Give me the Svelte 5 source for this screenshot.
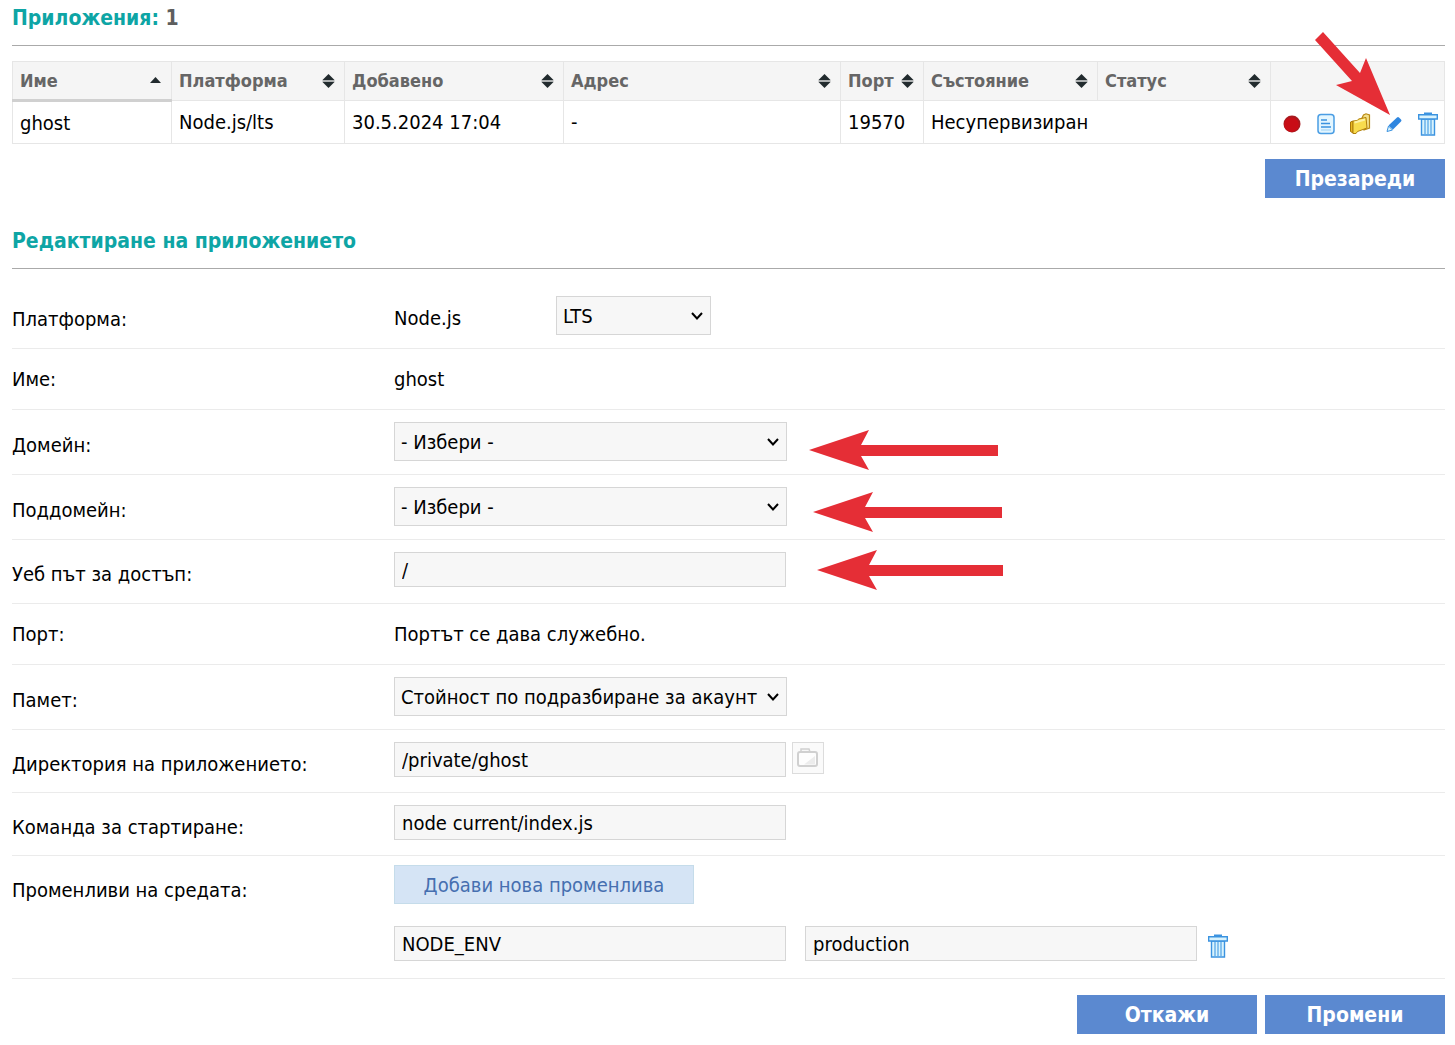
<script>
  const columns = [
    { name: 'Име', cls: 'c-name', sort: 'asc' },
    { name: 'Платформа', cls: 'c-platform', sort: 'both' },
    { name: 'Добавено', cls: 'c-added', sort: 'both' },
    { name: 'Адрес', cls: 'c-address', sort: 'both' },
    { name: 'Порт', cls: 'c-port', sort: 'both' },
    { name: 'Състояние', cls: 'c-state', sort: 'both' },
    { name: 'Статус', cls: 'c-status', sort: 'both' }
  ];
  let directory = $state('/private/ghost');
  let command = $state('node current/index.js');
  let webPath = $state('/');
  let envName = $state('NODE_ENV');
  let envValue = $state('production');
</script>

{#snippet trash()}
  <svg class="trash" width="20" height="24" viewBox="0 0 20 24" aria-hidden="true">
    <path d="M3.500 7h13v16h-13z" fill="#d9f3fd" stroke="#3b93e0" stroke-width="1.4" />
    <path d="M7 7v15M10 7v15M13 7v15" stroke="#5aa8e8" stroke-width="1.3" />
    <path d="M6 1.5h8" stroke="#3b93e0" stroke-width="2" />
    <path d="M.7 2.700h18.600v4.300H.7z" fill="#d9f3fd" stroke="#3b93e0" stroke-width="1.4" />
  </svg>
{/snippet}

{#snippet chevron()}
  <svg class="chevron" width="12" height="8" viewBox="0 0 12 8" aria-hidden="true">
    <path d="M1 1l5 5.500 5-5.500" fill="none" stroke="#000" stroke-width="2" />
  </svg>
{/snippet}

{#snippet arrow(cls, length)}
  <svg class="arrow {cls}" width={length} height="42" aria-hidden="true">
    <path d="M0 21L60 1L52 16H{length}V27H52L60 41Z" fill="#e52e36" />
  </svg>
{/snippet}

<main>
  <h2>Приложения: <span>1</span></h2>

  <div class="apps">
    <table>
      <colgroup>
        {#each columns as c}<col class={c.cls} />{/each}
        <col class="c-actions" />
      </colgroup>
      <thead>
        <tr>
          {#each columns as c}
            <th class:sorted={c.sort === 'asc'} aria-sort={c.sort === 'asc' ? 'ascending' : 'none'}>
              <button class="sort">
                {c.name}
                <svg width="13" height="16" viewBox="0 0 13 16" aria-hidden="true">
                  {#if c.sort === 'asc'}
                    <path d="M1 10L6.500 4L12 10Z" fill="#222b2e" />
                  {:else}
                    <path d="M.5 7L6.500 1L12.500 7Z" fill="#222b2e" />
                    <path d="M.5 9L6.500 15L12.500 9Z" fill="#222b2e" />
                    <path d="M.5 8h12" stroke="#aeb1b2" stroke-width="2" />
                  {/if}
                </svg>
              </button>
            </th>
          {/each}
          <th></th>
        </tr>
      </thead>
      <tbody>
        <tr>
          <td>ghost</td>
          <td>Node.js/lts</td>
          <td>30.5.2024 17:04</td>
          <td>-</td>
          <td>19570</td>
          <td colspan="2">Несупервизиран</td>
          <td class="tools">
            <div class="actions">
              <button aria-label="Спри">
                <svg width="18" height="18" viewBox="0 0 18 18">
                  <circle cx="9" cy="9" r="8.500" fill="#a81a1f" />
                  <circle cx="8.500" cy="9.700" r="7.300" fill="#c80d16" />
                </svg>
              </button>
              <button aria-label="Дневник">
                <svg width="18" height="22" viewBox="0 0 18 22">
                  <rect x="1" y="1.500" width="16" height="19" rx="3" fill="#e3f6ff" stroke="#4a9de4" stroke-width="1.500" />
                  <path d="M4 7h6M4 10.500h9M4 14h10" stroke="#3b93e0" stroke-width="1.400" />
                  <path d="M4 17h10" stroke="#9cd0f5" />
                </svg>
              </button>
              <button aria-label="Файлове">
                <svg width="22" height="22" viewBox="0 0 22 22">
                  <path d="M13 5L14.500 2L17 .8L20.500 2V15L15 17Z" fill="#f3e08a" stroke="#b98a14" stroke-width="1.200" />
                  <path d="M1.500 9L4 8V20L1.500 18.500Z" fill="#e8b923" stroke="#a87708" />
                  <path d="M4 8L8.500 7.500L9.500 6L17 4.500L18 15L8.500 18.500L7 20.500L4 20.500Z" fill="#f8dc4e" stroke="#b07f0c" />
                  <path d="M5.500 9.500L16 6.500" stroke="#fdf2a6" stroke-width="2" />
                </svg>
              </button>
              <button aria-label="Редактирай">
                <svg width="16" height="17" viewBox="0 0 16 17">
                  <path d="M2.500 9.500L11 1.500Q12 .5 13 1.500L15 3.500Q16 4.500 15 5.500L7 13.500Z" fill="#2f86df" />
                  <path d="M2.500 10L6.500 14L1 15.500Z" fill="#d9f3fd" stroke="#3b93e0" />
                </svg>
              </button>
              <button aria-label="Изтрий">{@render trash()}</button>
            </div>
          </td>
        </tr>
      </tbody>
    </table>
    <svg class="pointer" width="76" height="84" viewBox="0 0 76 84" aria-hidden="true">
      <path d="M8 0L45 41L51 26L75 83L21 53L37 49L0 8Z" fill="#e52e36" />
    </svg>
  </div>

  <div class="buttons reload"><button class="primary">Презареди</button></div>

  <h2 class="second">Редактиране на приложението</h2>

  <form>
    <div class="row first select-row">
      <label for="version">Платформа:</label>
      <div class="field">
        <span class="platform">Node.js</span>
        <span class="select short"><select id="version"><option>LTS</option></select>{@render chevron()}</span>
      </div>
    </div>
    <div class="row text-row">
      <span class="label">Име:</span>
      <div class="field">ghost</div>
    </div>
    <div class="row select-row">
      <label for="domain">Домейн:</label>
      <div class="field">
        <span class="select"><select id="domain"><option>- Избери -</option></select>{@render chevron()}</span>
        {@render arrow('a1', 189)}
      </div>
    </div>
    <div class="row select-row">
      <label for="subdomain">Поддомейн:</label>
      <div class="field">
        <span class="select"><select id="subdomain"><option>- Избери -</option></select>{@render chevron()}</span>
        {@render arrow('a2', 189)}
      </div>
    </div>
    <div class="row roomy">
      <label for="path">Уеб път за достъп:</label>
      <div class="field">
        <input id="path" type="text" bind:value={webPath} />
        {@render arrow('a3', 186)}
      </div>
    </div>
    <div class="row text-row">
      <span class="label">Порт:</span>
      <div class="field">Портът се дава служебно.</div>
    </div>
    <div class="row select-row">
      <label for="memory">Памет:</label>
      <div class="field">
        <span class="select"><select id="memory"><option>Стойност по подразбиране за акаунт</option></select>{@render chevron()}</span>
      </div>
    </div>
    <div class="row">
      <label for="dir">Директория на приложението:</label>
      <div class="field">
        <input id="dir" type="text" bind:value={directory} />
        <button type="button" class="browse" aria-label="Избери директория">
          <svg width="22" height="20" viewBox="0 0 22 20" aria-hidden="true">
            <path d="M4 4V1h8l1 3" fill="#f7f7f7" stroke="#d0d0d0" stroke-width="1.500" />
            <rect x="1" y="4" width="19" height="14" rx="2" fill="#fdfdfd" stroke="#d0d0d0" stroke-width="2" />
            <path d="M7 16.500L18 8v8.500Z" fill="#ececec" />
          </svg>
        </button>
      </div>
    </div>
    <div class="row">
      <label for="cmd">Команда за стартиране:</label>
      <div class="field"><input id="cmd" type="text" bind:value={command} /></div>
    </div>
    <div class="row env">
      <span class="label">Променливи на средата:</span>
      <div class="stack">
        <button type="button" class="add">Добави нова променлива</button>
        <div class="pair">
          <input type="text" aria-label="Име на променлива" bind:value={envName} />
          <input type="text" aria-label="Стойност" bind:value={envValue} />
          <button type="button" class="icon" aria-label="Изтрий променливата">{@render trash()}</button>
        </div>
      </div>
    </div>
    <div class="buttons">
      <button type="button" class="primary">Откажи</button>
      <button type="submit" class="primary">Промени</button>
    </div>
  </form>
</main>

<style>
  :global(body) { background: #fff; }
  main, button, input, select {
    font-family: 'DejaVu Sans Condensed', Tahoma, 'Noto Sans', sans-serif;
    font-size: 20px;
    line-height: 24px;
    color: #000;
  }
  main { padding: 6px 10px 11px 12px; }
  button { border: 0; background: none; padding: 0; cursor: pointer; }
  svg { display: block; flex: none; }
  h2 {
    margin: 0 0 15px;
    padding-bottom: 15px;
    border-bottom: 1px solid #aaa;
    font-size: 21px;
    line-height: 24px;
    color: #0ea5a5;
  }
  h2 span { color: #5e5e5e; }
  h2.second { margin: 31px 0 0; }

  .apps { position: relative; }
  table { width: 100%; table-layout: fixed; border-collapse: collapse; }
  th, td { border: 1px solid #e6e6e6; padding: 0 7px; text-align: left; white-space: nowrap; }
  th { height: 37px; padding-right: 9px; background: #f5f5f5; }
  td { height: 41px; }
  th.sorted { border-bottom: 3px solid #d0d0d0; }
  .c-name { width: 159px; }
  .c-platform, .c-status { width: 173px; }
  .c-state, .c-actions { width: 174px; }
  .c-added { width: 219px; }
  .c-port { width: 83px; }
  .sort {
    display: flex;
    align-items: center;
    justify-content: space-between;
    width: 100%;
    font-size: 18px;
    font-weight: 700;
    color: #666;
  }
  td.tools { padding: 0 4px; }
  .actions { display: flex; align-items: center; justify-content: flex-end; gap: 10px; padding-top: 4px; }
  .actions button { display: grid; place-items: center; width: 24px; }
  .pointer { position: absolute; right: 54px; top: -29px; }

  .buttons { display: flex; justify-content: flex-end; gap: 8px; padding-top: 16px; }
  .buttons.reload { padding-top: 15px; }
  .primary { width: 180px; height: 39px; background: #5b89d0; color: #fff; font-size: 21px; font-weight: 700; }

  .row {
    display: grid;
    grid-template-columns: 382px 1fr;
    align-items: start;
    padding: 12px 0 15px;
    border-bottom: 1px solid #ebebeb;
  }
  .row.roomy { padding-bottom: 16px; }
  .row.select-row { padding-bottom: 13px; }
  .row.first { padding-top: 27px; }
  .row.text-row { padding: 18px 0; }
  .row.env { padding: 9px 0 17px; }
  label, .label { padding-top: 10px; }
  .select-row label { padding-top: 11px; }
  .text-row .label { padding: 0; }
  .env .label { padding-top: 13px; }
  .field { position: relative; display: flex; align-items: flex-start; gap: 6px; }
  .platform { width: 156px; padding-top: 10px; }
  .select { position: relative; width: 393px; }
  .select.short { width: 155px; }
  select {
    appearance: none;
    display: block;
    box-sizing: border-box;
    width: 100%;
    height: 39px;
    padding: 0 24px 0 6px;
    border: 1px solid #d6d6d6;
    border-radius: 0;
    background: #f7f7f7;
  }
  .chevron { position: absolute; right: 8px; top: 16px; pointer-events: none; }
  input {
    box-sizing: border-box;
    width: 392px;
    height: 35px;
    padding: 0 7px;
    border: 1px solid #d6d6d6;
    border-radius: 0;
    background: #f7f7f7;
  }
  .arrow { position: absolute; top: 7px; }
  .a1 { left: 415px; }
  .a2 { left: 419px; top: 4px; }
  .a3 { left: 423px; top: -3px; }
  .browse {
    display: grid;
    place-items: center;
    width: 32px;
    height: 32px;
    border: 1px solid #dcdcdc;
    background: #fafafa;
  }
  .add { width: 300px; height: 39px; border: 1px solid #c5dcea; background: #d5e4f5; color: #466fb0; }
  .pair { display: flex; align-items: center; gap: 19px; margin-top: 22px; }
  .pair .icon { margin-left: -8px; padding-top: 4px; }
</style>
